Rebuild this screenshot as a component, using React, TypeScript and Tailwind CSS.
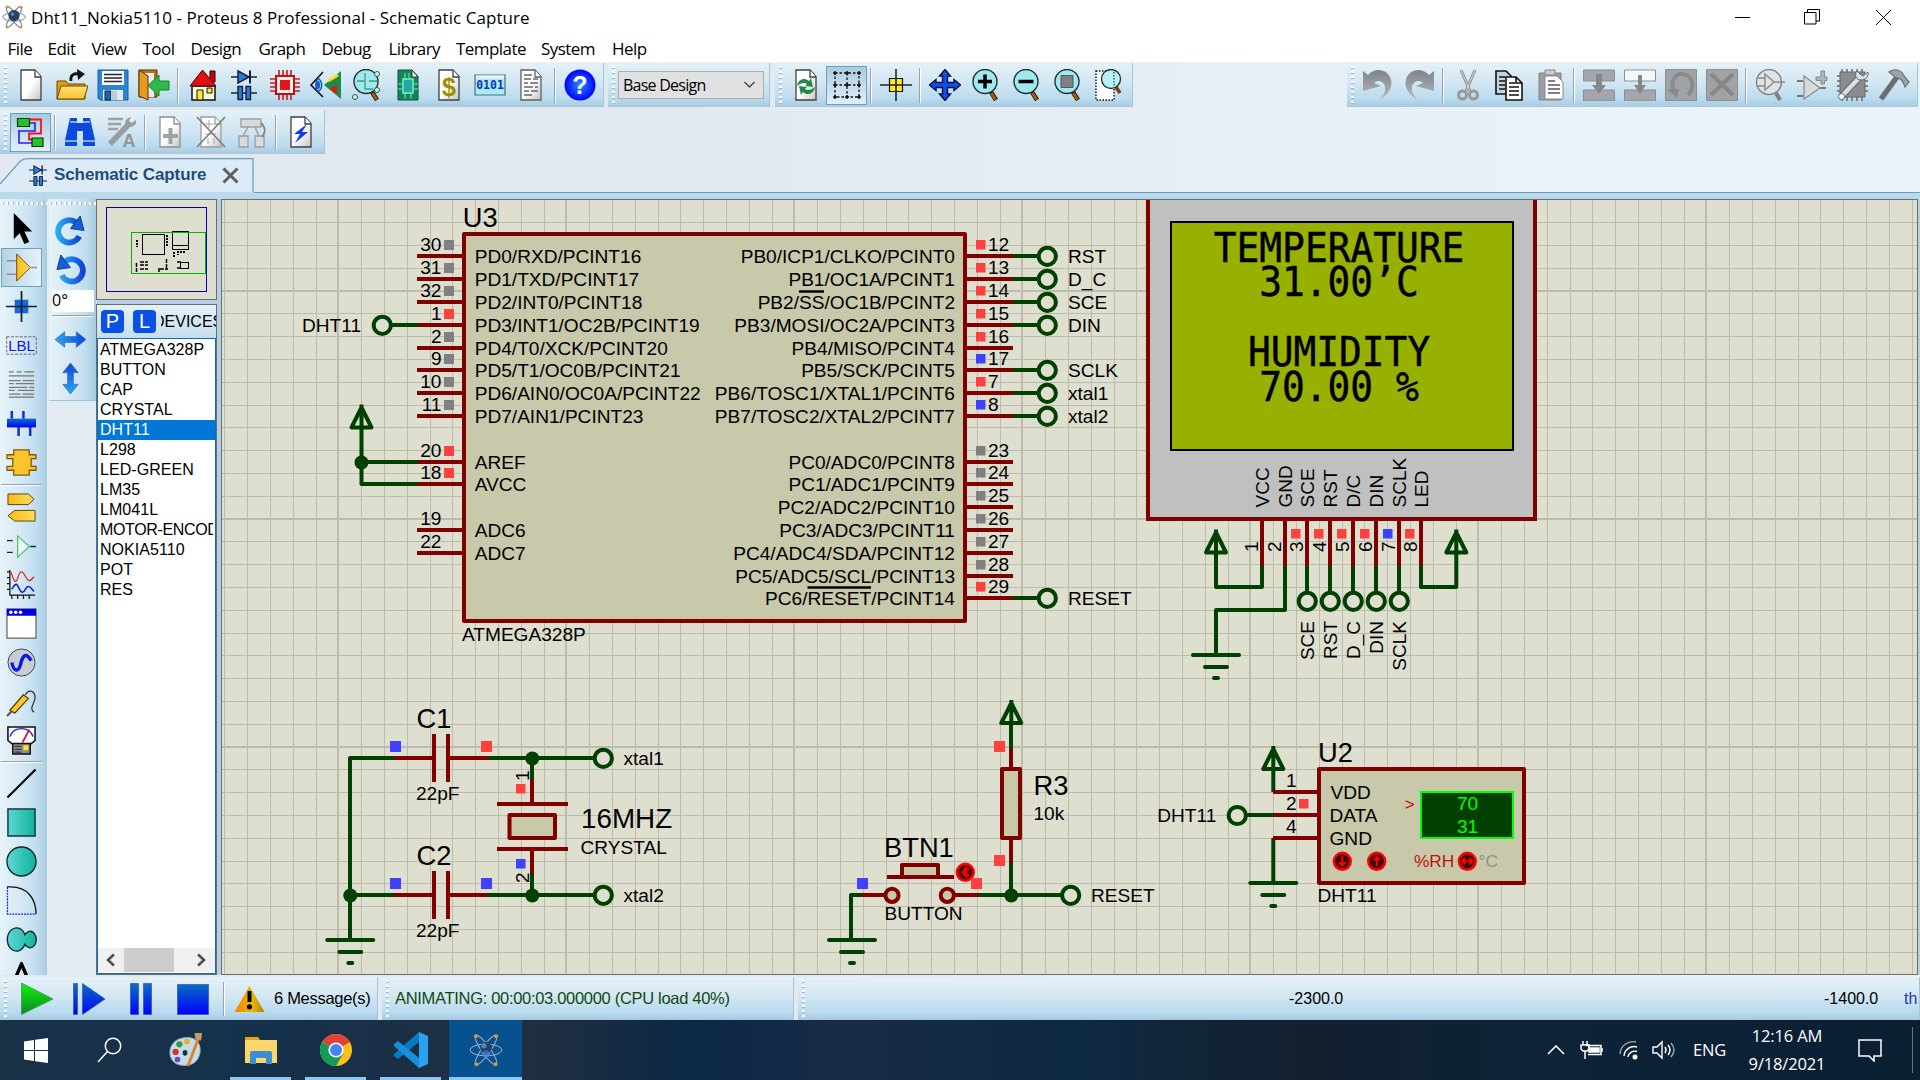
import React from "react";

const RED = "#800000";
const GREEN = "#004000";
const PAPER = "#dfdfd0";
const BODY = "#c8c8aa";
const HOT = "#ff4040";
const COLD = "#4040ff";
const IDLE = "#808080";
const SANS = "'Liberation Sans', Arial, sans-serif";

/* ---------- shared bits ---------- */

function Icon({ children, w = 32, h = 32, box = "0 0 32 32" }: { children: React.ReactNode; w?: number; h?: number; box?: string }) {
  return (
    <svg width={w} height={h} viewBox={box} fill="none" className="block shrink-0">
      {children}
    </svg>
  );
}

function Defs() {
  return (
    <svg width="0" height="0" className="absolute">
      <defs>
        <linearGradient id="folder" x1="0" y1="0" x2="0" y2="1"><stop offset="0" stopColor="#ffe27a" /><stop offset="1" stopColor="#fbbf2a" /></linearGradient>
        <linearGradient id="teal" x1="0" y1="0" x2="1" y2="0"><stop offset="0" stopColor="#5fd6d6" /><stop offset="1" stopColor="#0fb597" /></linearGradient>
        <linearGradient id="blue" x1="0" y1="0" x2="0" y2="1"><stop offset="0" stopColor="#0a6fc4" /><stop offset="1" stopColor="#0000ff" /></linearGradient>
        <linearGradient id="blueh" x1="0" y1="0" x2="1" y2="0"><stop offset="0" stopColor="#2ba8ee" /><stop offset="1" stopColor="#1044dd" /></linearGradient>
        <linearGradient id="bluev" x1="0" y1="0" x2="0" y2="1"><stop offset="0" stopColor="#1044dd" /><stop offset="1" stopColor="#2ba8ee" /></linearGradient>
        <linearGradient id="gray" x1="0" y1="0" x2="0" y2="1"><stop offset="0" stopColor="#7f8489" /><stop offset="1" stopColor="#b5b9bd" /></linearGradient>
        <linearGradient id="page" x1="0" y1="0" x2="1" y2="1"><stop offset="0.5" stopColor="#fff" /><stop offset="1" stopColor="#c4c4c4" /></linearGradient>
        <linearGradient id="go" x1="0" y1="0" x2="0" y2="1"><stop offset="0" stopColor="#10f010" /><stop offset="1" stopColor="#0a8a20" /></linearGradient>
        <linearGradient id="warn" x1="0" y1="0" x2="1" y2="0"><stop offset="0" stopColor="#ff8000" /><stop offset="0.6" stopColor="#e8b800" /><stop offset="1" stopColor="#b08000" /></linearGradient>
        <radialGradient id="help"><stop offset="0" stopColor="#2a90ff" /><stop offset="1" stopColor="#0000ff" /></radialGradient>
        <linearGradient id="amber" x1="0" y1="0" x2="1" y2="0"><stop offset="0" stopColor="#fbb814" /><stop offset="1" stopColor="#ffe060" /></linearGradient>
      </defs>
    </svg>
  );
}

const Sheet = ({ stroke = "#404040" }: { stroke?: string }) => (
  <>
    <path d="M6 1h14l6 6.500v23.500H6z" fill="url(#page)" stroke={stroke} strokeWidth="1.300" />
    <path d="M20 1v7h6" fill="#fff" stroke={stroke} strokeWidth="1.300" />
  </>
);

const Lens = ({ children }: { children?: React.ReactNode }) => (
  <>
    <path d="M21 23l5 8" stroke="#2a1400" strokeWidth="4.500" />
    <path d="M21.500 24l4 6.500" stroke="#a85a10" strokeWidth="2.800" />
    <circle cx="15" cy="12.500" r="12" fill="#9fe8ee" stroke="#20303a" strokeWidth="1.400" />
    {children}
  </>
);

const Caps = () => (
  <>
    <path d="M3 8h26M3 24h26" stroke="#222" strokeWidth="1.600" />
    <path d="M10 2l11 6-11 6z" fill="#2a80d8" stroke="#102040" strokeWidth="1.500" />
    <path d="M22 1.500v13" stroke="#102040" strokeWidth="2" />
    <path d="M10 17.500h4.500v13H10zM18 17.500h4.500v13H18z" fill="#2a80d8" stroke="#102040" strokeWidth="1.400" />
  </>
);

const Atom = ({ size = 24, ring = "#7b858f", dim = false }: { size?: number; ring?: string; dim?: boolean }) => (
  <Icon w={size} h={size} box="0 0 32 32">
    <g stroke={ring} strokeWidth={dim ? 0.9 : 1.3}>
      <ellipse cx="16" cy="16" rx="15" ry="5.500" />
      <ellipse cx="16" cy="16" rx="17" ry="4" transform="rotate(55 16 16)" />
      <ellipse cx="16" cy="16" rx="17" ry="4" transform="rotate(-55 16 16)" />
    </g>
    <circle cx="16" cy="14" r={dim ? 5.5 : 7.5} fill="#26415f" />
    <circle cx="14" cy="12" r="2.500" fill="#5c83b5" />
    {dim && <path d="M11 19l5-3 5 3-5 6z" fill="#3f7fe0" opacity=".7" />}
    <g fill="#c79a4a"><circle cx="6.500" cy="3" r="1.900" /><circle cx="25.500" cy="3" r="1.900" /><circle cx="7" cy="29.500" r="1.900" /><circle cx="25" cy="29.500" r="1.900" /></g>
  </Icon>
);

/* ---------- toolbar ---------- */

const Grip = () => (
  <div className="w-[10px] shrink-0 self-stretch flex justify-center py-[3px]">
    <div className="w-[3px] h-full bg-[repeating-linear-gradient(to_bottom,#ffffff_0_2px,#9fb6c6_2px_3px,transparent_3px_5px)]" />
  </div>
);
const Sep = () => (
  <div className="w-2 shrink-0 flex justify-center">
    <div className="w-[2px] h-[35px] bg-gray-400 border-r border-white" />
  </div>
);
const Cell = ({ children, on }: { children: React.ReactNode; on?: boolean }) => (
  <div className={on ? "w-[41px] h-[39px] shrink-0 flex items-center justify-center border border-[#6aa0c0] bg-gradient-to-b from-[#a9cbe0] to-[#e2eff8]" : "w-[41px] h-[39px] shrink-0 flex items-center justify-center"}>
    <Icon>{children}</Icon>
  </div>
);
const Bar = ({ children, className }: { children: React.ReactNode; className: string }) => (
  <div className={"h-[44px] flex items-center border-r border-[#a4c6dc] bg-linear-[to_bottom,#e4f1f8_0%,#d3e6f2_45%,#b9dbef_82%,#a9c8dd_100%] " + className}>
    <Grip />
    {children}
  </div>
);

function MainToolbar() {
  return (
    <div className="flex h-[46px]">
      <Bar className="w-[604px]">
        <Cell><Sheet /></Cell>
        <Cell>
          <path d="M1 30V12h9l2 3h17v15z" fill="#e0a010" stroke="#6b4a00" />
          <path d="M1 30l4-13h27l-4 13z" fill="url(#folder)" stroke="#6b4a00" />
          <path d="M15 12c-1-6 3-8 8-7" stroke="#111" strokeWidth="2.800" /><path d="M21 0l8 5-7 6z" fill="#111" />
        </Cell>
        <Cell>
          <path d="M1 1h30v30H3l-2-2z" fill="#2a86d0" stroke="#1060a8" />
          <path d="M5 2h22v14H5z" fill="#fff" /><path d="M7 5.500h18M7 9h18M7 12.500h18" stroke="#223" strokeWidth="1.500" />
          <path d="M6 21h20v10H6z" fill="#e8e8e8" /><path d="M8 22h6v9H8z" fill="#2060b0" stroke="#123" /><path d="M14 22h6v9h-6z" fill="#bcd" />
        </Cell>
        <Cell>
          <path d="M1 1h18v27H1z" fill="#b8721c" stroke="#5a3000" />
          <path d="M4 4h12v24H4z" fill="#e8f0f4" /><path d="M1 1l9 6v24l-9-4z" fill="#e89a20" stroke="#5a3000" />
          <path d="M31 12H21V6l-11 10.500L21 27v-6h10z" fill="#30b848" stroke="#108028" />
        </Cell>
        <Sep />
        <Cell>
          <path d="M23 2h5v11h-5z" fill="#c00" stroke="#300" />
          <path d="M5 17h23v14H5z" fill="#fffbe0" stroke="#111" strokeWidth="1.500" /><path d="M15.500 1L3 17h26z" fill="#e01010" stroke="#500" />
          <path d="M10 21h6v10h-6z" fill="#ffe92a" stroke="#111" /><path d="M20 19h5v5h-5z" fill="#ffe92a" stroke="#111" />
        </Cell>
        <Cell><Caps /></Cell>
        <Cell>
          <path d="M10 1v30M14 1v30M18 1v30M22 1v30M1 10h30M1 14h30M1 18h30M1 22h30" stroke="#d02020" strokeWidth="1.700" />
          <path d="M7 7h18v18H7z" fill="#f8f0f0" stroke="#c01010" strokeWidth="2" /><path d="M11 11h10v10H11z" fill="#e01818" />
        </Cell>
        <Cell>
          <path d="M13 3L1 16l12 12" stroke="#111" strokeWidth="1.600" /><path d="M8 9c5 4 5 10 0 14-3-4-3-10 0-14z" fill="#9cd0f4" stroke="#0a50a0" strokeWidth="1.300" />
          <ellipse cx="8" cy="16" rx="2" ry="4" fill="#1060c0" />
          <path d="M31 2v28L14 16z" fill="#1c8a48" /><path d="M18 12l10-6" stroke="#f8e020" strokeWidth="3" /><path d="M19 19l8-2v8z" fill="#f01010" />
        </Cell>
        <Cell><Lens><path d="M6 12h8V4M14 12v8h8M18 12h8" stroke="#40a070" strokeWidth="1.300" /></Lens><g fill="#d4f4ea" stroke="#186840"><circle cx="26" cy="5" r="2.500" /><circle cx="26" cy="21" r="2.500" /><circle cx="4" cy="28" r="2.500" /></g></Cell>
        <Cell><path d="M6 1h14l6 6.500v23.500H6z" fill="#12885a" stroke="#055038" /><path d="M20 1v7h6z" fill="#fff" stroke="#333" /><path d="M11 10h10v14H11z" fill="#22a8a0" stroke="#80f0c0" strokeWidth="1.400" /><path d="M13 4v6M17 4v6M13 24v6M19 24v6M6 15h5M21 15h5M6 20h5M21 20h5" stroke="#70e8b0" /></Cell>
        <Cell><Sheet /><text x="16" y="27" fontSize="25" fontWeight="700" fontFamily={SANS} fill="#9a9000" textAnchor="middle">$</text></Cell>
        <Cell><path d="M1 6h30v20H1z" fill="#a8ecf4" stroke="#5a6a78" strokeWidth="1.200" /><path d="M2 6.500h28v3H2z" fill="#e8f6fa" /><text x="16" y="20" fontSize="11.500" fontWeight="700" fontFamily="'DejaVu Sans Mono', monospace" fill="#1030c0" textAnchor="middle">0101</text></Cell>
        <Cell><Sheet stroke="#606060" /><path d="M9 6h8M9 10h7M18 10h5M9 14h4M15 14h8M9 18h9M20 18h3M9 22h5M16 22h7M9 26h8" stroke="#666" strokeWidth="1.400" /></Cell>
        <Sep />
        <Cell><circle cx="16" cy="16" r="15.500" fill="url(#help)" /><text x="16" y="24.500" fontSize="25" fontWeight="700" fontFamily={SANS} fill="#fff" textAnchor="middle">?</text></Cell>
      </Bar>
      <Bar className="w-[162px] ml-1">
        <div className="w-[146px] h-[28px] flex items-center justify-between border border-[#adadad] bg-[#e1e1e1] pl-1 pr-2">
          <span className="font-['Open_Sans'] text-[16px] tracking-[-0.75px] text-black whitespace-nowrap">Base Design</span>
          <svg width="11" height="8" viewBox="0 0 11 8" fill="none"><path d="M.5 1l5 5 5-5" stroke="#444" strokeWidth="1.300" /></svg>
        </div>
      </Bar>
      <Bar className="w-[358px] ml-[5px]">
        <Cell><Sheet /><path d="M7 17c1-7 8-9 12-5l2-3 2 9-8-1 2-2c-3-2-6-1-10 2z" fill="#1f8a4a" /><path d="M25 18c-1 7-8 9-12 5l-2 3-2-9 8 1-2 2c3 2 6 1 10-2z" fill="#1f8a4a" /></Cell>
        <Cell on><path d="M4 4h24v24H4zM16 4v24M4 16h24" stroke="#111" strokeWidth="1.300" strokeDasharray="2.500 2" /><path d="M2 4h4M4 2v4M14 4h4M16 2v4M26 4h4M28 2v4M2 16h4M4 14v4M14 16h4M16 14v4M26 16h4M28 14v4M2 28h4M4 26v4M14 28h4M16 26v4M26 28h4M28 26v4" stroke="#111" strokeWidth="1.500" /></Cell>
        <Sep />
        <Cell><path d="M9.500 9.500h13v13h-13z" fill="#ffe920" stroke="#111" strokeWidth="1.200" /><path d="M16 0v32M0 16h32" stroke="#222" strokeWidth="1.600" /></Cell>
        <Sep />
        <Cell><path d="M16 .5l5.500 6.500h-3v6.500H25v-3l6.500 5.500-6.500 5.500v-3h-6.500V25h3L16 31.500 10.500 25h3v-6.500H7v3L.5 16 7 10.500v3h6.500V7h-3z" fill="#1050e8" stroke="#001040" strokeWidth="1.400" /></Cell>
        <Cell><Lens><path d="M8 12.500h14M15 5.500v14" stroke="#000" strokeWidth="3.500" /></Lens></Cell>
        <Cell><Lens><path d="M7.500 12.500h15" stroke="#000" strokeWidth="3.500" /></Lens></Cell>
        <Cell><Lens><path d="M9 6.500h12v12H9z" fill="#808080" stroke="#555" /></Lens></Cell>
        <Cell><path d="M3 2h18v29H3z" fill="#fff" stroke="#111" strokeDasharray="1.500 1.500" strokeWidth="1.400" /><path d="M23 18l4 6" stroke="#7a3c08" strokeWidth="3.500" /><circle cx="18" cy="10" r="9.500" fill="#b8f2f6" stroke="#203038" strokeWidth="1.300" /><path d="M21 3v14" stroke="#111" strokeDasharray="1.500 1.500" /></Cell>
      </Bar>
      <Bar className="w-[571px] ml-auto mr-[2px]">
        <Cell><path d="M1 2v20l18-5-7-3c4-4 10-2 11 4 1 5-2 9-6 13 9-5 14-13 12-20C27 1 14-3 6 6z" fill="url(#gray)" /></Cell>
        <Cell><path d="M31 2v20l-18-5 7-3c-4-4-10-2-11 4-1 5 2 9 6 13C6 26 1 18 3 11 5 1 18-3 26 6z" fill="url(#gray)" /></Cell>
        <Sep />
        <Cell><path d="M9 1l9 21M23 1l-9 21" stroke="#8c8f94" strokeWidth="3" /><path d="M9 1l9 21M23 1l-9 21" stroke="#d6d8da" strokeWidth="1" /><circle cx="10.500" cy="26" r="4" stroke="#96999d" strokeWidth="3" /><circle cx="21.500" cy="26" r="4" stroke="#96999d" strokeWidth="3" /></Cell>
        <Cell><g stroke="#111" strokeWidth="1.600"><path d="M3 2h10l5 5v18H3z" fill="#c4d4e2" /><path d="M6 8h6M6 12h6M6 16h6M6 20h6" /><path d="M13 8h10l6 6v17H13z" fill="#fff" /><path d="M16 14h6M16 18h10M16 22h10M16 26h10M23 8v6h6" /></g></Cell>
        <Cell><path d="M5 4h22v27H5z" fill="#9b9fa3" stroke="#808488" /><path d="M11 1h10v5H11z" fill="#c8cacc" stroke="#85898d" /><path d="M11 7h12l6 6v17H11z" fill="#fff" stroke="#888" /><path d="M14 12h7M14 16h12M14 20h12M14 24h12" stroke="#555" strokeWidth="1.300" /></Cell>
        <Sep />
        <Cell><path d="M.5 1h31v11H.5zM.5 21h31v11H.5z" fill="#a3a7ab" stroke="#8b8f93" /><path d="M13 5h6v11h4l-7 9-7-9h4z" fill="#84888c" /></Cell>
        <Cell><path d="M.5 1h31v11H.5z" fill="#f4f8fa" stroke="#8b8f93" /><path d="M.5 21h31v11H.5z" fill="#a3a7ab" stroke="#8b8f93" /><path d="M14 6h4v10h4l-6 9-6-9h4z" fill="#84888c" /></Cell>
        <Cell><path d="M.5 .5h31v31H.5z" fill="#a0a3a6" stroke="#8b8f93" /><path d="M9 24C4 10 12 4 18 5c10 1 12 14 5 21" stroke="#888b8e" strokeWidth="4" /><path d="M2 20l12 0-2 9z" fill="#888b8e" /></Cell>
        <Cell><path d="M.5 .5h31v31H.5z" fill="#a0a3a6" stroke="#8b8f93" /><path d="M5 5l22 21M27 5L5 26" stroke="#858789" strokeWidth="4" /></Cell>
        <Sep />
        <Cell><path d="M21 24l4 7" stroke="#7c7f82" strokeWidth="4" /><circle cx="14" cy="13" r="12.500" fill="#e0e3e5" stroke="#808387" strokeWidth="1.400" /><path d="M3 9h7M3 17h7M10 5v16l9-8zM19 13h11" stroke="#85888c" strokeWidth="1.400" /></Cell>
        <Cell><path d="M1 12h6M1 27h6M24 19h6" stroke="#555" strokeWidth="1.500" /><path d="M8 7l16 12L8 30z" fill="#d8dadc" stroke="#8c8f92" strokeWidth="1.300" /><path d="M20 8h5V2h3.500v6H31v3.500h-2.500V15H25v-3.500h-5z" fill="#b0b3b6" stroke="#85888c" /></Cell>
        <Cell><path d="M5 0v32M10 0v32M15 0v32M20 0v32M25 0v32M0 7h31M0 12h31M0 17h31M0 22h31" stroke="#66696c" strokeWidth="1.500" /><path d="M3 3h25v25H3z" fill="#8a8d90" stroke="#66696c" /><path d="M4 28L22 9" stroke="#66696c" strokeWidth="6.500" /><path d="M4 28L22 9" stroke="#dcdfe0" strokeWidth="4.500" /><path d="M20 2c-3 4-1 9 4 9s8-4 7-8l-5 4-3-2z" fill="#dcdfe0" stroke="#66696c" /><circle cx="4.500" cy="27.500" r="3" fill="#fff" stroke="#66696c" /></Cell>
        <Cell><path d="M3 30L19 8" stroke="#6a6e72" strokeWidth="5.500" /><path d="M11 3c6-4 13-2 15 4l5 6-4 5c-2-7-5-9-10-10z" fill="#a0a4a8" stroke="#6e7276" strokeWidth="1.200" /></Cell>
      </Bar>
    </div>
  );
}

function SecondToolbar() {
  return (
    <div className="flex h-[45px] pt-px">
      <Bar className="w-[325px]">
        <Cell on><path d="M15 7h5v8H4M4 14v13h13" stroke="#2020ff" strokeWidth="1.600" /><path d="M15 3.500h11v14H14v6h3" stroke="#ff1010" strokeWidth="1.800" /><path d="M2.500 2.500h12v8h-12zM17 22h11v8.500H17z" fill="#22c428" stroke="#063a08" strokeWidth="1.200" /></Cell>
        <Sep />
        <Cell><path d="M6 2h7v5h6V2h7l5 22v6H19V15h-6v15H1v-6z" fill="#0a48e0" /><path d="M1 25h12M19 25h12M6 6h7M19 6h7" stroke="#a8d0f0" strokeWidth="1.400" /></Cell>
        <Cell><path d="M3 3h15M3 8h13M3 13h10" stroke="#9ea2a6" strokeWidth="2.500" /><path d="M5 28L24 8" stroke="#9a9da0" strokeWidth="5.500" /><path d="M26 1c-5 1-7 5-5 9l4 1c4 0 7-3 6-7l-4 3-3-2z" fill="#9a9da0" /><text x="24" y="31" fontFamily={SANS} fontSize="18" fontWeight="700" textAnchor="middle" fill="#92969a">A</text></Cell>
        <Sep />
        <Cell><Sheet stroke="#8c8f92" /><path d="M9 20h15M16.500 12v16" stroke="#a0a3a6" strokeWidth="4" /></Cell>
        <Cell><Sheet stroke="#9a9da0" /><path d="M10 8h8M14 4v8M10 18h11M13 22v6M19 22v6" stroke="#a4a7aa" /><path d="M2 1l28 30M30 1L2 31" stroke="#7e8184" strokeWidth="1.700" /></Cell>
        <Cell><path d="M5 3h20v8H5zM3 20h9v11H3zM19 20h9v11h-9z" fill="#d8dadc" stroke="#9a9da0" strokeWidth="1.300" /><path d="M12 11L7 20M19 11l4 9" stroke="#9a9da0" strokeWidth="1.500" /><path d="M25 7c5 5 5 9 1 14" stroke="#7f8285" strokeWidth="1.800" /></Cell>
        <Sep />
        <Cell><Sheet /><path d="M22 8L9 18h6l-5 9 13-11h-6z" fill="#1038f0" /></Cell>
      </Bar>
    </div>
  );
}

function TabStrip() {
  return (
    <div className="h-[45px] flex items-end">
      <div className="relative w-[254px] h-[41px]">
        <svg width="254" height="41" viewBox="0 0 254 41" className="absolute inset-0">
          <path d="M0 26L20 3.500Q23 .7 27 .7H253V41H0z" fill="#dcebf5" />
          <path d="M0 34h254v7H0z" fill="#b9d9ec" />
          <path d="M0 26L20 3.500Q23 .7 27 .7H253V34" fill="none" stroke="#6a9dbd" strokeWidth="1.200" />
        </svg>
        <div className="relative flex items-center h-[34px] pl-[27px]">
          <Icon w={22} h={25} box="0 0 32 32"><Caps /></Icon>
          <span className="ml-[5px] w-[154px] text-[17px] tracking-[-0.1px] font-bold text-[#1f4e79] whitespace-nowrap">Schematic Capture</span>
          <svg width="17" height="17" viewBox="0 0 17 17" className="ml-[14px]"><path d="M1.500 1.500l14 14M15.500 1.500l-14 14" stroke="#5c6064" strokeWidth="3" /></svg>
        </div>
      </div>
      <div className="flex-1 h-[7px] border-t border-[#6a9dbd] bg-[#b9d9ec]" />
    </div>
  );
}

/* ---------- side tools ---------- */

const Tool = ({ children, on, tall }: { children: React.ReactNode; on?: boolean; tall?: boolean }) => (
  <div className={(tall ? "h-[39px] " : "h-[38.8px] ") + "w-[41px] shrink-0 flex items-center justify-center " + (on ? "border border-[#6aa0c0] bg-gradient-to-r from-[#b4d2e4] to-[#e6f2f9]" : "")}>
    <Icon w={31} h={31}>{children}</Icon>
  </div>
);
const HGrip = () => <div className="h-[3px] mt-[3px] self-stretch shrink-0 bg-[repeating-linear-gradient(to_right,#ffffff_0_2px,#a5bac8_2px_3px,transparent_3px_5px)]" />;
const HSep = ({ className }: { className: string }) => (
  <div className={"w-[41px] flex items-center shrink-0 " + className}><div className="w-full h-[2px] bg-gray-400 border-b border-white" /></div>
);

function SideTools() {
  return (
    <div className="w-[47px] h-[776px] overflow-hidden flex flex-col items-start pl-px bg-linear-[to_right,#e6f3f9_0%,#d5e8f4_45%,#bfdcee_80%,#a8cbe1_100%]">
      <HGrip />
      <div className="h-[4px] shrink-0" />
      <Tool tall><path d="M8 0v27l6-6 5 11 5-2-5-11h8z" fill="#000" /></Tool>
      <Tool tall on><path d="M1 9h11M1 23h11M26 16h7" stroke="#8a8f94" strokeWidth="1.400" /><path d="M11 2l14 14-14 14z" fill="url(#amber)" stroke="#6a5010" /></Tool>
      <Tool tall><path d="M9 9h14v14H9z" fill="#1468d8" /><path d="M16 0v32M0 16h32" stroke="#102030" strokeWidth="1.800" /></Tool>
      <Tool tall><path d="M.7 7h30.600v18H.7z" stroke="#666" strokeDasharray="3 1.500" /><text x="16" y="22" fontFamily={SANS} fontSize="15.500" fill="#1616d8" textAnchor="middle">LBL</text></Tool>
      <Tool tall><path d="M3 3h5M11 3h5M19 3h10M3 7h26M3 12h12M17 12h12M3 15h5M10 15h19M3 19h19M24 19h5M3 22h6M12 22h17M3 26h12M17 26h12M3 29h26" stroke="#777" strokeWidth="1.300" /></Tool>
      <Tool tall><path d="M6 3v8M18 3v8M13 19v10M25 19v10" stroke="#1030e0" strokeWidth="2.600" /><path d="M1 11h30v9H1z" fill="url(#blue)" /></Tool>
      <Tool tall><path d="M8 3h16v5h7v4h-5v8h5v4h-7v5H8v-5H1v-4h6v-8H1V8h7z" fill="#fcc42a" stroke="#7a5c08" strokeWidth="1.300" /></Tool>
      <HSep className="h-[6px]" />
      <Tool><path d="M2 2h21l6 5.500-6 5.500H2z" fill="url(#amber)" stroke="#5a4508" /><path d="M30 19H9l-7 5.500L9 30h21z" fill="url(#amber)" stroke="#5a4508" /></Tool>
      <Tool><path d="M1 10h6M1 22h6M25 16h6" stroke="#222" strokeWidth="1.400" /><path d="M12 5l12 11-12 11z" fill="#eef8f4" stroke="#50c070" strokeWidth="1.300" /></Tool>
      <Tool><path d="M4 1v26h26M1 3h3M1 9h3M1 15h3M1 21h3M6 27v4M12 27v4M18 27v4M24 27v4" stroke="#111" strokeWidth="1.300" /><path d="M5 3c2 6 4 12 6 9s2-9 5-9 5 9 8 9c2 0 3-2 5-4" stroke="#e02020" strokeWidth="1.300" /><path d="M6 21c2-3 3-6 5-5s3 8 6 8 3-6 6-6 4 4 6 5" stroke="#1020e0" strokeWidth="1.600" /></Tool>
      <Tool><path d="M1 1h30v30H1z" fill="#fff" stroke="#666" strokeWidth="1.300" /><path d="M1 1h30v7H1z" fill="#0000e8" /><g fill="#fff"><circle cx="5" cy="4.500" r="1.800" /><circle cx="10" cy="4.500" r="1.800" /><circle cx="15" cy="4.500" r="1.800" /></g></Tool>
      <Tool><circle cx="16" cy="16" r="14" fill="#c8cdd2" stroke="#444" /><path d="M6 16c2 10 7 10 9 2s5-14 11-4" stroke="#0818f0" strokeWidth="3.500" /></Tool>
      <Tool><path d="M1 31l6-6" stroke="#555" strokeWidth="2" /><path d="M4 25L18 9l5 4L9 28z" fill="#fcc42a" stroke="#5a4508" strokeWidth="1.300" /><path d="M20 9c4-7 10-3 10 3s-7 11-1 15" stroke="#333" strokeWidth="1.300" /></Tool>
      <Tool><path d="M2 2h28v14l-5 4H7l-5-4z" fill="#fff" stroke="#111" strokeWidth="1.600" /><path d="M4 12C8 1 24 1 28 12" stroke="#2030e0" strokeWidth="1.500" /><path d="M24 5l-7 13" stroke="#e01010" strokeWidth="1.800" /><path d="M7 19h18v11H7z" fill="#8a8d90" stroke="#111" strokeWidth="1.500" /><path d="M9 22h7M9 25h7M9 28h7" stroke="#222" /><path d="M18 21h5v5h-5z" fill="#ffe820" /></Tool>
      <HSep className="h-[5px]" />
      <Tool><path d="M1.500 30.500l29-29" stroke="#000" strokeWidth="2.200" /></Tool>
      <Tool><path d="M2 2h28v28H2z" fill="url(#teal)" stroke="#103838" strokeWidth="1.500" /></Tool>
      <Tool><circle cx="16" cy="16" r="15" fill="url(#teal)" stroke="#102828" strokeWidth="1.400" /></Tool>
      <Tool><path d="M1 2h4C22 2 31 14 31 30" stroke="#111" strokeWidth="1.400" /><path d="M1.500 2v28H31" stroke="#2020e8" strokeWidth="1.300" strokeDasharray="2 1" /></Tool>
      <Tool><path d="M19.500 11a9.500 12 0 1 0 0 10a6.500 8.500 0 1 0 0-10z" fill="url(#teal)" stroke="#102828" strokeWidth="1.400" /></Tool>
      <Tool><path d="M10 16l6-14 6 14" stroke="#000" strokeWidth="3.500" /></Tool>
    </div>
  );
}

function RotateTools() {
  return (
    <div className="ml-[2px] w-[47px] h-[202px] flex flex-col items-start bg-linear-[to_right,#e6f3f9_0%,#d5e8f4_45%,#bfdcee_80%,#a8cbe1_100%] border-b border-[#a0c4da]">
      <HGrip />
      <div className="h-[6px] shrink-0" />
      <div className="pl-px"><Tool tall><path d="M25 22A11.500 11.500 0 1 1 22 8" stroke="url(#blueh)" strokeWidth="6" /><path d="M16 14L26 1l4 15z" fill="#1560d8" stroke="#0a3c90" /></Tool></div>
      <div className="pl-px"><Tool tall><path d="M7 22A11.500 11.500 0 1 0 10 8" stroke="url(#blueh)" strokeWidth="6" /><path d="M16 14L6 1 2 16z" fill="#1560d8" stroke="#0a3c90" /></Tool></div>
      <div className="ml-[3px] mt-px w-[42px] h-[22px] bg-white font-['Open_Sans'] text-[16px] leading-[20px] text-black">0°</div>
      <HSep className="h-[8px] ml-[3px]" />
      <div className="pl-px"><Tool tall><path d="M0 16l10-8v5h12V8l10 8-10 8v-5H10v5z" fill="url(#blueh)" stroke="#3a78a8" strokeWidth=".8" /></Tool></div>
      <div className="pl-px"><Tool tall><path d="M16 0l8 10h-5v12h5l-8 10-8-10h5V10H8z" fill="url(#bluev)" stroke="#3a78a8" strokeWidth=".8" /></Tool></div>
    </div>
  );
}

/* ---------- device browser ---------- */

const DEVICES = ["ATMEGA328P", "BUTTON", "CAP", "CRYSTAL", "DHT11", "L298", "LED-GREEN", "LM35", "LM041L", "MOTOR-ENCODER", "NOKIA5110", "POT", "RES"];

function Browser() {
  return (
    <div className="w-[121px] h-[776px] flex flex-col gap-1">
      <div className="h-[101px] border border-[#6e6e6e] bg-[#dfdfd0]">
        <svg width="119" height="99" viewBox="97 200 119 99" fill="none">
          <rect x="106.500" y="207.500" width="100" height="84" stroke="#0000c8" />
          <g stroke="#000">
            <rect x="142.500" y="234.500" width="22" height="20" />
            <rect x="172.500" y="231.500" width="16" height="18" /><path d="M172 245.500h17" />
            <path d="M137 240v7M167 235v12M174 252v6M178 251v4M181 251v3M184 251v3" strokeWidth="2" strokeDasharray="2 1" />
            <path d="M136.500 263v9M140 262h8M140 265h8M140 269h8M166.500 259v11M160 269h8M159 272v-4M177 262h4M177 268h4" strokeWidth="1.500" strokeDasharray="4 1" />
            <rect x="180.500" y="262.500" width="8" height="6" />
          </g>
          <rect x="131.500" y="232.500" width="74" height="41" stroke="#00b400" />
        </svg>
      </div>
      <div className="flex-1 flex flex-col border border-[#6e6e6e]">
        <div className="h-[33px] flex items-center bg-linear-[to_bottom,#e4f1f8,#c3def0]">
          <div className="ml-1 size-[23px] rounded bg-[#0b50e4] text-white text-[20px] leading-[23px] text-center shrink-0">P</div>
          <div className="ml-[9px] size-[23px] rounded bg-[#0b50e4] text-white text-[20px] leading-[23px] text-center shrink-0">L</div>
          <div className="ml-[5px] flex-1 overflow-hidden"><span className="block -ml-[8px] text-[16px] text-black whitespace-nowrap">DEVICES</span></div>
        </div>
        <div className="flex-1 flex flex-col border border-[#0b6fc0] bg-white overflow-hidden">
          <div className="flex-1 pt-px">
            {DEVICES.map((d) => (
              <div key={d} className={"h-5 w-full pl-[2px] pr-[2px] text-[16px] leading-[20px] whitespace-nowrap " + (d === "DHT11" ? "bg-[#0078d7] text-white" : "text-black") + (d.length > 10 ? " tracking-[-0.35px]" : " tracking-[0.05px]")}>
                <div className="overflow-hidden">{d}</div>
              </div>
            ))}
          </div>
          <div className="h-[24px] mb-px bg-[#f0f0f0] flex items-center">
            <svg width="26" height="24" viewBox="0 0 26 24" fill="none"><path d="M16 6.500L10 12l6 5.500" stroke="#505050" strokeWidth="2.600" /></svg>
            <div className="w-[50px] h-full bg-[#cdcdcd]" />
            <svg width="26" height="24" viewBox="0 0 26 24" fill="none" className="ml-auto"><path d="M9 6.500l6 5.500-6 5.500" stroke="#505050" strokeWidth="2.600" /></svg>
          </div>
        </div>
      </div>
    </div>
  );
}

/* ---------- schematic ---------- */

const W = ({ d, c = GREEN }: { d: string; c?: string }) => <path d={d} stroke={c} strokeWidth="4" strokeLinejoin="round" fill="none" />;
const R = ({ d }: { d: string }) => <W d={d} c={RED} />;
const Term = ({ x, y }: { x: number; y: number }) => <circle cx={x} cy={y} r="8.600" stroke={GREEN} strokeWidth="4" fill={PAPER} />;
const Dot = ({ x, y }: { x: number; y: number }) => <circle cx={x} cy={y} r="7" fill={GREEN} />;
const Sq = ({ x, y, c, s = 10 }: { x: number; y: number; c: string; s?: number }) => <rect x={x} y={y} width={s} height={s} fill={c} />;
const Power = ({ x, y }: { x: number; y: number }) => <W d={`M${x} ${y + 3}l-10 20h20zM${x} ${y}v24`} />;
const Ground = ({ x, y }: { x: number; y: number }) => (
  <path d={`M${x - 23} ${y}h46M${x - 11} ${y + 12}h22M${x - 2} ${y + 23}h4`} stroke={GREEN} strokeWidth="4" strokeLinecap="round" />
);
const T = ({ x, y, s = 19.1, a = "start", c = "#000", children }: { x: number; y: number; s?: number; a?: "start" | "end" | "middle"; c?: string; children: React.ReactNode }) => (
  <text x={x} y={y - 0.4} fontSize={s} textAnchor={a} fill={c}>{children}</text>
);
const V = ({ x, y, a = "start", children }: { x: number; y: number; a?: "start" | "end"; children: React.ReactNode }) => (
  <text transform={`translate(${x} ${y}) rotate(-90)`} fontSize="19" textAnchor={a}>{children}</text>
);
const Knob = ({ x, y, d }: { x: number; y: number; d: string }) => (
  <g transform={`translate(${x} ${y})`}>
    <circle r="8.400" fill="#400000" stroke="#ff0000" strokeWidth="2.600" />
    <path d={d} stroke="#ff0000" strokeWidth="2" fill="none" />
  </g>
);

const LEFT_PINS: [number, string, string, string][] = [
  [256, "30", "PD0/RXD/PCINT16", IDLE], [279, "31", "PD1/TXD/PCINT17", IDLE], [302, "32", "PD2/INT0/PCINT18", IDLE],
  [325, "1", "PD3/INT1/OC2B/PCINT19", HOT], [348, "2", "PD4/T0/XCK/PCINT20", IDLE], [370, "9", "PD5/T1/OC0B/PCINT21", IDLE],
  [393, "10", "PD6/AIN0/OC0A/PCINT22", IDLE], [416, "11", "PD7/AIN1/PCINT23", IDLE], [462, "20", "AREF", HOT],
  [484, "18", "AVCC", HOT], [530, "19", "ADC6", ""], [553, "22", "ADC7", ""],
];
const RIGHT_PINS: [number, string, string, string, string][] = [
  [256, "12", "PB0/ICP1/CLKO/PCINT0", HOT, "RST"], [279, "13", "PB1/OC1A/PCINT1", HOT, "D_C"], [302, "14", "PB2/SS/OC1B/PCINT2", HOT, "SCE"],
  [325, "15", "PB3/MOSI/OC2A/PCINT3", HOT, "DIN"], [348, "16", "PB4/MISO/PCINT4", HOT, ""], [370, "17", "PB5/SCK/PCINT5", COLD, "SCLK"],
  [393, "7", "PB6/TOSC1/XTAL1/PCINT6", HOT, "xtal1"], [416, "8", "PB7/TOSC2/XTAL2/PCINT7", COLD, "xtal2"], [462, "23", "PC0/ADC0/PCINT8", IDLE, ""],
  [484, "24", "PC1/ADC1/PCINT9", IDLE, ""], [507, "25", "PC2/ADC2/PCINT10", IDLE, ""], [530, "26", "PC3/ADC3/PCINT11", IDLE, ""],
  [553, "27", "PC4/ADC4/SDA/PCINT12", IDLE, ""], [576, "28", "PC5/ADC5/SCL/PCINT13", IDLE, ""], [598, "29", "PC6/RESET/PCINT14", HOT, "RESET"],
];
const LCD_PINS: [number, string, string, string][] = [
  [1262, "VCC", "", ""], [1285, "GND", "", ""], [1307, "SCE", HOT, "SCE"], [1330, "RST", HOT, "RST"],
  [1353, "D/C", HOT, "D_C"], [1376, "DIN", HOT, "DIN"], [1399, "SCLK", COLD, "SCLK"], [1421, "LED", HOT, ""],
];
const LCD_LINES: [number, number, string][] = [
  [1213.8, 262, "TEMPERATURE"], [1259.3, 296.3, "31.00’C"], [1248, 366.3, "HUMIDITY"], [1259.3, 401.2, "70.00 %"],
];

function Grid() {
  const v = Array.from({ length: 76 }, (_, i) => i - 5).map((k) => ({ k, p: Math.round(338.4 + 22.8 * k) })).filter((l) => l.p < 1917);
  const h = Array.from({ length: 36 }, (_, i) => i - 3).map((k) => ({ k, p: Math.round(290.6 + 22.8 * k) })).filter((l) => l.p < 974);
  return (
    <g fill="#bcbcae">
      {v.map(({ k, p }) => (k % 10 === 0 ? <rect key={k} x={p - 1} y="200" width="2" height="774" /> : <rect key={k} x={p} y="200" width="1" height="774" />))}
      {h.map(({ k, p }) => (k % 10 === 0 ? <rect key={k} x="222" y={p - 1} width="1695" height="2" /> : <rect key={k} x="222" y={p} width="1695" height="1" />))}
    </g>
  );
}

function Controller() {
  return (
    <g>
      <rect x="464" y="234" width="501" height="387" fill={BODY} stroke={RED} strokeWidth="4" strokeLinejoin="round" />
      <T x={462.7} y={227} s={27.3}>U3</T>
      <T x={462} y={641}>ATMEGA328P</T>
      {LEFT_PINS.map(([y, n, label, c]) => (
        <g key={n}>
          <R d={`M417 ${y}H463`} />
          <T x={441.5} y={y - 4.5} a="end">{n}</T>
          <T x={474.7} y={y + 7}>{label}</T>
          {c && <Sq x={444} y={y - 16} c={c} />}
        </g>
      ))}
      {RIGHT_PINS.map(([y, n, label, c, net]) => (
        <g key={n}>
          <R d={`M966 ${y}H1013`} />
          <T x={988} y={y - 4.5}>{n}</T>
          <T x={955} y={y + 7} a="end">{label}</T>
          <Sq x={976} y={y - 16} c={c} s={9.5} />
          {net && <><W d={`M1013 ${y}H1039`} /><Term x={1047.3} y={y + 0.3} /><T x={1068} y={y + 7}>{net}</T></>}
        </g>
      ))}
      <path d="M799 291.500h25M807.500 587.500h63.500" stroke="#000" strokeWidth="2.500" />
      <W d="M392 325H418M361.500 426V484H418M361.500 462H418" />
      <Term x={382.3} y={325.3} />
      <T x={302} y={332}>DHT11</T>
      <Power x={361.5} y={404.5} />
      <Dot x={361.5} y={462.5} />
    </g>
  );
}

function Lcd() {
  return (
    <g>
      <rect x="1148" y="150" width="387" height="369" fill="#c0c0c0" stroke={RED} strokeWidth="4" />
      <rect x="1171" y="222" width="342" height="228" fill="#98b000" stroke="#000" strokeWidth="2" />
      {LCD_LINES.map(([x, y, s]) => (
        <text key={s} x={x} y={y} fontFamily="'DejaVu Sans Mono', monospace" fontSize="40.500" textLength={s.length * 22.77} lengthAdjust="spacingAndGlyphs" fill="#000" stroke="#000" strokeWidth=".5">{s}</text>
      ))}
      {LCD_PINS.map(([x, label, c, net], i) => (
        <g key={label}>
          <V x={x + 7} y={507.5}>{label}</V>
          <V x={x - 4} y={552}>{i + 1}</V>
          <R d={`M${x} 520V566`} />
          {c && <Sq x={x - 16} y={529} c={c} s={9.5} />}
          {net && <><W d={`M${x} 566V593`} /><Term x={x + 0.3} y={601.3} /><V x={x + 7} y={621} a="end">{net}</V></>}
        </g>
      ))}
      <W d="M1262 566V587H1216V550M1285 566V610H1216V655M1421 566V587H1456.300V550" />
      <Power x={1216} y={529.5} />
      <Power x={1456.3} y={529.5} />
      <Ground x={1216} y={655} />
    </g>
  );
}

function Oscillator() {
  return (
    <g>
      <W d="M394 758H350V940M350 895H394M488 758H596M488 895H596M532 758V780M532 873V895" />
      {[758, 895].map((y, i) => (
        <g key={y}>
          <R d={`M394 ${y}H434M434 ${y - 24}V${y + 24}M448 ${y - 24}V${y + 24}M448 ${y}H488`} />
          <T x={416.5} y={y - 30} s={27.3}>{"C" + (i + 1)}</T>
          <T x={416} y={y + 42.5}>22pF</T>
          <Sq x={390} y={y - 17} c={COLD} s={11} />
          <Sq x={481} y={y - 17} c={i ? COLD : HOT} s={11} />
          <Dot x={532.3} y={y + 0.5} />
          <Term x={603.3} y={y + 0.3} />
          <T x={623.5} y={y + 7}>{"xtal" + (i + 1)}</T>
        </g>
      ))}
      <Dot x={350.3} y={895.5} />
      <Ground x={350.3} y={940} />
      <R d="M532 780V804M532 849V873M497 804H568M497 849H568" />
      <rect x="509.500" y="815" width="45.500" height="23" fill={BODY} stroke={RED} strokeWidth="4" strokeLinejoin="round" />
      <V x={528.5} y={781}>1</V>
      <V x={528.5} y={883}>2</V>
      <Sq x={516} y={784} c={HOT} s={9.5} />
      <Sq x={516} y={859} c={COLD} s={9.5} />
      <T x={581} y={828.7} s={27.8}>16MHZ</T>
      <T x={580.5} y={854}>CRYSTAL</T>
    </g>
  );
}

function ResetSwitch() {
  return (
    <g>
      <W d="M862 895H851V940M979 895H1062M1011 722V749M1011 863V895" />
      <R d="M862 895H886M953 895H979M887 877H954M1011 749V768M1011 840V863" />
      <rect x="902" y="865" width="36" height="12" fill={BODY} stroke={RED} strokeWidth="4" strokeLinejoin="round" />
      <circle cx="892" cy="895.300" r="6.600" fill={BODY} stroke={RED} strokeWidth="4" />
      <circle cx="947.300" cy="895.300" r="6.600" fill={BODY} stroke={RED} strokeWidth="4" />
      <rect x="1002" y="769" width="18" height="69" fill={BODY} stroke={RED} strokeWidth="4" strokeLinejoin="round" />
      <Power x={1011.3} y={700} />
      <Dot x={1011.3} y={895.5} />
      <Term x={1070.7} y={895.3} />
      <Ground x={852} y={940} />
      <Sq x={857} y={878} c={COLD} s={11} />
      <Knob x={965.3} y={872.3} d="M4 -3H-1V3H4M-4 0H2M1 -6V6" />
      <Sq x={971} y={878} c={HOT} s={11} />
      <Sq x={994} y={741} c={HOT} s={11} />
      <Sq x={994} y={855} c={HOT} s={11} />
      <T x={884} y={857.7} s={27.3}>BTN1</T>
      <T x={884.5} y={920.7}>BUTTON</T>
      <T x={1033.5} y={795} s={27.3}>R3</T>
      <T x={1033.5} y={820}>10k</T>
      <T x={1091} y={902}>RESET</T>
    </g>
  );
}

function Sensor() {
  return (
    <g>
      <rect x="1319" y="769" width="205" height="114" fill={BODY} stroke={RED} strokeWidth="4" strokeLinejoin="round" />
      <W d="M1273.300 768V792M1246 815H1274M1273.300 838V883" />
      <R d="M1273 792H1319M1274 815H1319M1273 838H1319" />
      <Power x={1273.3} y={746} />
      <Ground x={1273.3} y={883} />
      <Term x={1237.3} y={815.5} />
      <T x={1157.2} y={822}>DHT11</T>
      <T x={1296.5} y={787.5} a="end">1</T>
      <T x={1296.5} y={810.5} a="end">2</T>
      <T x={1296.5} y={833.5} a="end">4</T>
      <Sq x={1299} y={799} c={HOT} s={9.5} />
      <T x={1330.5} y={799}>VDD</T>
      <T x={1329.5} y={822}>DATA</T>
      <T x={1329.5} y={845}>GND</T>
      <T x={1404.7} y={810.4} s={17} c="#c80000">&gt;</T>
      <rect x="1421" y="792" width="92" height="46" fill="#004000" stroke="#00ff00" strokeWidth="2" />
      <T x={1467.5} y={810.7} a="middle" c="#00ff00">70</T>
      <T x={1467.5} y={833} a="middle" c="#00ff00">31</T>
      <Knob x={1342.3} y={861.3} d="M0 -5V4M-3 1L0 4L3 1" />
      <Knob x={1376.7} y={861.3} d="M0 5V-4M-3 -1L0 -4L3 -1" />
      <T x={1414} y={867.7} s={17.3} c="#c01010">%RH</T>
      <Knob x={1467.3} y={861.3} d="M-5 0H5M-2 -3L-5 0L-2 3M2 -3L5 0L2 3" />
      <T x={1478.5} y={867.7} s={17.3} c="#909088">°C</T>
      <T x={1317.5} y={902.7}>DHT11</T>
      <T x={1318} y={762.7} s={27.3}>U2</T>
    </g>
  );
}

function Schematic() {
  return (
    <div className="ml-1 w-[1697px] h-[776px] border border-[#6e6e6e] bg-[#dfdfd0] overflow-hidden">
      <svg width="1695" height="774" viewBox="222 200 1695 774" fontFamily={SANS} className="block">
        <Grid />
        <Controller />
        <Lcd />
        <Oscillator />
        <ResetSwitch />
        <Sensor />
      </svg>
    </div>
  );
}

/* ---------- bottom bars ---------- */

const SEG = "h-full flex items-center border-r border-[#a4c6dc] bg-linear-[to_bottom,#e4f1f8_0%,#d3e6f2_45%,#b9dbef_82%,#a9c8dd_100%] ";

function StatusBar() {
  return (
    <div className="h-[43px] flex text-[16.500px] text-black whitespace-nowrap">
      <div className={SEG + "w-[378px]"}>
        <Grip />
        <svg width="204" height="34" viewBox="10 981 204 34" fill="none" className="shrink-0">
          <path d="M21.500 982v31.500L53 998z" fill="url(#go)" stroke="#3a8a50" strokeWidth=".7" />
          <g fill="url(#blue)" stroke="#2a5a90" strokeWidth=".7"><path d="M73.500 982.500h4v31h-4zM82.500 982.500v31L105 998zM130.500 982.500h8v31h-8zM143.500 982.500h8v31h-8zM177.500 983.500h31v30h-31z" /></g>
        </svg>
        <div className="ml-[9px] w-[2px] h-[34px] bg-gray-400 border-r border-white" />
        <svg width="31" height="28" viewBox="0 0 31 28" className="ml-[9px]"><path d="M15.500 1L30.500 27H.5z" fill="url(#warn)" /><path d="M15.500 6v11" stroke="#000" strokeWidth="4" /><circle cx="15.500" cy="21.800" r="2.600" /></svg>
        <span className="ml-[9px] tracking-[-0.3px]">6 Message(s)</span>
      </div>
      <div className={SEG + "w-[412px] ml-1"}>
        <Grip />
        <span className="ml-[3px] tracking-[-0.31px] text-[#104a10]">ANIMATING: 00:00:03.000000 (CPU load 40%)</span>
      </div>
      <div className={SEG + "flex-1 ml-1 overflow-hidden"}>
        <Grip />
        <span className="ml-[481px] w-[535px] text-[16px]">-2300.0</span>
        <span className="w-[80px] text-[16px]">-1400.0</span>
        <span className="text-[16px] text-[#2038a8]">th</span>
      </div>
    </div>
  );
}

const TaskButton = ({ children, open, active }: { children: React.ReactNode; open?: boolean; active?: boolean }) => (
  <div className={"h-full flex flex-col items-center shrink-0 " + (active ? "w-[73px] bg-[#07518f]" : "w-[75px]")}>
    <div className="flex-1 flex items-center pt-[3px]">{children}</div>
    <div className={"h-[3px] " + (active ? "w-full bg-[#8fc6f2]" : open ? "w-[61px] bg-[#8fc6f2]" : "w-[61px]")} />
  </div>
);

function Taskbar() {
  return (
    <div className="h-[60px] flex items-center text-white bg-linear-[to_right,#173247_0%,#15304a_14%,#1f2e42_28%,#0c2844_36%,#172b46_44%,#0e2942_56%,#13202f_68%,#0c2338_80%,#0b1f33_100%]">
      <div className="w-[72px] flex justify-center"><svg width="24" height="25" viewBox="0 0 24 25" fill="#fff"><path d="M0 3.500L10 2v10H0zM11 1.800L24 0v12H11zM0 13h10v10L0 21.500zM11 13h13v12l-13-1.800z" /></svg></div>
      <div className="w-[76px] flex justify-center"><svg width="26" height="26" viewBox="0 0 26 26" fill="none" stroke="#fff" strokeWidth="1.500"><circle cx="16" cy="9" r="7.700" /><path d="M10.500 14.500L1 25" /></svg></div>
      <TaskButton>
        <Icon w={36} h={36} box="0 0 38 36">
          <path d="M18 5C4 6 0 18 3 26c3 8 12 9 18 8 8-1 13-8 13-16C34 9 28 4 18 5z" fill="#c4dcea" stroke="#8aaabf" />
          <circle cx="8" cy="20" r="3.300" fill="#d83020" /><circle cx="12" cy="12" r="3.300" fill="#3a9a40" /><circle cx="20" cy="9" r="3" fill="#e8b020" /><circle cx="10" cy="28" r="3" fill="#7048b0" /><ellipse cx="18" cy="21" rx="2.500" ry="3" fill="#15304a" />
          <path d="M32 6L21 35" stroke="#e08020" strokeWidth="3" /><path d="M28 0h8l-1 8-6-1z" fill="#c89868" />
        </Icon>
      </TaskButton>
      <TaskButton open>
        <Icon w={34} h={30} box="0 0 34 30"><path d="M1 2h13l3 4H1z" fill="#e8a310" /><path d="M1 5h32v23H1z" fill="#fcd668" /><path d="M6 29V18q0-2 2-2h18q2 0 2 2v11h-6v-6H12v6z" fill="#3a8ed8" /></Icon>
      </TaskButton>
      <TaskButton open>
        <Icon w={34} h={34} box="0 0 34 34">
          <circle cx="17" cy="17" r="16" fill="#fbc116" /><path d="M17 17L3.100 9A16 16 0 0 1 30.900 9z" fill="#db4437" /><path d="M17 17L3.100 9A16 16 0 0 0 17 33l7-12z" fill="#109d58" />
          <circle cx="17" cy="17" r="7.600" fill="#fff" /><circle cx="17" cy="17" r="6" fill="#4285f4" />
        </Icon>
      </TaskButton>
      <TaskButton open>
        <Icon w={36} h={36} box="0 0 36 36"><path d="M26 0l9 4v28l-9 4z" fill="#2aa2f0" /><path d="M26 0v10L5 27l-4-3v-2z" fill="#0a78c4" /><path d="M26 36V26L5 9l-4 3v2z" fill="#1690dc" /></Icon>
      </TaskButton>
      <div className="w-px" />
      <TaskButton active><Atom size={34} ring="#a9b6c4" dim /></TaskButton>
      <div className="ml-auto flex items-center font-['Open_Sans'] text-[16.500px] tracking-[-0.5px]">
        <svg width="18" height="10" viewBox="0 0 18 10" fill="none" stroke="#fff" strokeWidth="1.600"><path d="M1 9l8-8 8 8" /></svg>
        <svg width="25" height="20" viewBox="0 0 25 20" fill="none" stroke="#fff" strokeWidth="1.500" className="ml-[15px]"><path d="M6 5.500h15v9H8" /><path d="M9 8h10v4H9z" fill="#fff" /><path d="M22 8v4M3 1v4M7 1v4M1 5h8v4l-2 2H3L1 9zM5 11v8" /></svg>
        <svg width="20" height="20" viewBox="0 0 20 20" fill="none" stroke="#fff" strokeWidth="1.400" className="ml-[14px]"><path d="M1 14A13 13 0 0 1 17 2" opacity=".6" /><path d="M5 16A10 10 0 0 1 18 7M9 17a7 7 0 0 1 9-5.500" /><circle cx="16" cy="17" r="1.800" fill="#fff" /></svg>
        <svg width="24" height="20" viewBox="0 0 24 20" fill="none" stroke="#fff" strokeWidth="1.400" className="ml-[13px]"><path d="M1 7h4l5-5v16l-5-5H1z" /><path d="M13 7q2 3 0 6M16 5q4 5 0 10" /><path d="M19 3q6 7 0 14" opacity=".6" /></svg>
        <span className="ml-[17px] w-[38px] tracking-[-0.2px]">ENG</span>
        <div className="ml-[4px] w-[104px] text-center leading-[28px] pb-px"><div className="tracking-[-0.15px]">12:16 AM</div><div className="tracking-[-0.15px]">9/18/2021</div></div>
        <svg width="24" height="24" viewBox="0 0 24 24" fill="none" stroke="#fff" strokeWidth="1.500" className="ml-[19px]"><path d="M1 2h22v16h-7v5l-5-5H1z" /></svg>
        <div className="ml-[30px] w-px h-[46px] bg-gray-500 mr-[7px]" />
      </div>
    </div>
  );
}

/* ---------- header ---------- */

function Header() {
  return (
    <div className="h-[63px] bg-white border-b border-[#f0f0f0] font-['Open_Sans'] text-black whitespace-nowrap">
      <div className="h-[34px] flex items-center">
        <div className="ml-[2px]"><Atom size={24} /></div>
        <span className="ml-[5px] pt-px text-[17px] tracking-[0.05px]">Dht11_Nokia5110 - Proteus 8 Professional - Schematic Capture</span>
        <div className="ml-auto flex items-center text-black">
          <svg width="15" height="15" viewBox="0 0 15 15" fill="none" stroke="currentColor"><path d="M0 7.500h15" /></svg>
          <svg width="16" height="16" viewBox="0 0 16 16" fill="none" stroke="currentColor" className="ml-[54px]"><path d="M.5 3.500h11.500v11.500H.5zM3.500 3.500V.5h12v11.500H12" /></svg>
          <svg width="15" height="15" viewBox="0 0 15 15" fill="none" stroke="currentColor" className="ml-[56px] mr-[29px]"><path d="M0 0l15 15M15 0L0 15" /></svg>
        </div>
      </div>
      <div className="flex pl-[7.500px] text-[17px] leading-[30px] tracking-[-0.55px]">
        <span className="w-[40px]">File</span><span className="w-[44px]">Edit</span><span className="w-[51px]">View</span><span className="w-[48px]">Tool</span>
        <span className="w-[68px]">Design</span><span className="w-[63px]">Graph</span><span className="w-[67px]">Debug</span><span className="w-[67.500px]">Library</span>
        <span className="w-[85px]">Template</span><span className="w-[71px]">System</span><span>Help</span>
      </div>
    </div>
  );
}

export default function App() {
  return (
    <div className="w-[1920px] h-[1080px] overflow-hidden flex flex-col bg-linear-[to_right,#e1e8f0_0%,#e2e9f1_40%,#e9f1f8_75%,#eaf2fa_100%] font-['Liberation_Sans']">
      <Defs />
      <Header />
      <MainToolbar />
      <SecondToolbar />
      <TabStrip />
      <div className="h-[776px] flex bg-linear-[to_right,#e2eaf2_0px,#e2eaf2_96px,#b5d0e2_97px,#b5d0e2_100%]">
        <SideTools />
        <RotateTools />
        <Browser />
        <Schematic />
      </div>
      <div className="h-[2px]" />
      <StatusBar />
      <Taskbar />
    </div>
  );
}
